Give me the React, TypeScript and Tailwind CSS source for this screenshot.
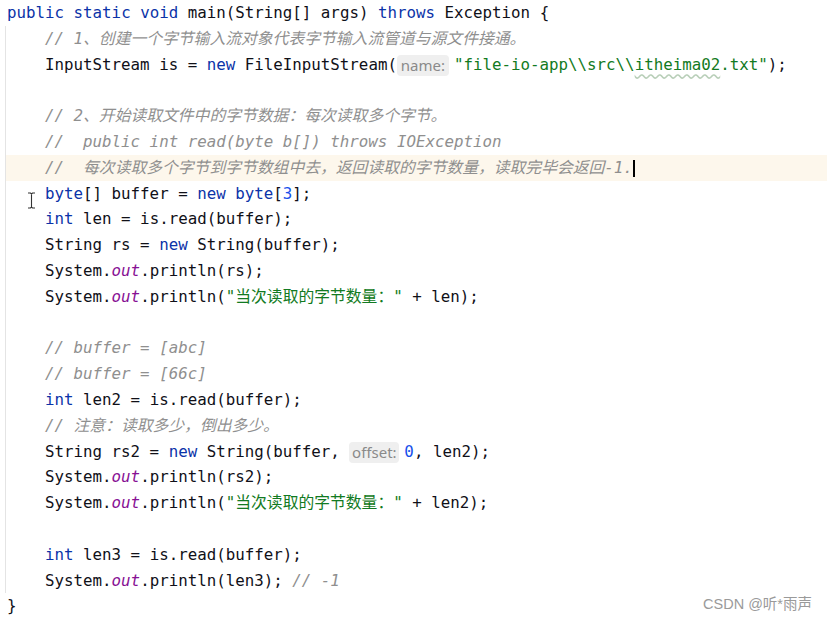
import type { ReactNode } from "react";

const mono = "font-['DejaVu_Sans_Mono','Noto_Sans_CJK_SC',monospace]";

function K({ children }: { children: ReactNode }) {
  return <span className="text-[#0b33a8]">{children}</span>;
}
function S({ children }: { children: ReactNode }) {
  return <span className="text-[#127a22]">{children}</span>;
}
function C({ children }: { children: ReactNode }) {
  return <span className="italic text-[#8f8f8f]">{children}</span>;
}
function F({ children }: { children: ReactNode }) {
  return <span className="italic text-[#871094]">{children}</span>;
}
function N({ children }: { children: ReactNode }) {
  return <span className="text-[#1750eb]">{children}</span>;
}
function Hint({ label, w }: { label: string; w: string }) {
  return (
    <span
      className={`inline-block ${w} h-[21px] mr-[5px] rounded-[4px] bg-[#efefef] text-center align-middle font-['Noto_Sans',sans-serif] not-italic text-[15px] leading-[21px] text-[#8a8a8a]`}
    >
      {label}
    </span>
  );
}

function Line({ children }: { children?: ReactNode }) {
  return <div className="h-[25.8px] leading-[25.8px] whitespace-pre">{children}</div>;
}

export default function App() {
  return (
    <div className={`relative w-[827px] h-[625px] overflow-hidden bg-white text-[15.8px] text-[#101018] ${mono}`}>
      <div className="pl-[7px]">
        <Line>
          <K>public static void</K> main(String[] args) <K>throws</K> Exception {"{"}
        </Line>
      </div>

      {/* method body with indent guide */}
      <div className="ml-[5px] border-l border-[#e4e4e4]">
        <div className="pl-[39px]">
          <Line>
            <C>// 1、创建一个字节输入流对象代表字节输入流管道与源文件接通。</C>
          </Line>
          <Line>
            InputStream is = <K>new</K> FileInputStream(<Hint label="name:" w="w-[52px]" />
            <S>
              "file-io-app\\src\\
              <span className="underline decoration-wavy decoration-[#b9cfb9] underline-offset-[4px]">itheima02</span>
              .txt"
            </S>
            );
          </Line>
          <Line />
          <Line>
            <C>// 2、开始读取文件中的字节数据：每次读取多个字节。</C>
          </Line>
          <Line>
            <C>//  public int read(byte b[]) throws IOException</C>
          </Line>
        </div>
        {/* current line */}
        <div className="pl-[39px] bg-[#fdf7ec]">
          <Line>
            <C>//  每次读取多个字节到字节数组中去，返回读取的字节数量，读取完毕会返回-1.</C>
            <span className="inline-block w-[2px] h-[17px] bg-black align-middle" />
          </Line>
        </div>
        <div className="pl-[39px]">
          <Line>
            <K>byte</K>[] buffer = <K>new byte</K>[<N>3</N>];
          </Line>
          <Line>
            <K>int</K> len = is.read(buffer);
          </Line>
          <Line>
            String rs = <K>new</K> String(buffer);
          </Line>
          <Line>
            System.<F>out</F>.println(rs);
          </Line>
          <Line>
            System.<F>out</F>.println(<S>"当次读取的字节数量："</S> + len);
          </Line>
          <Line />
          <Line>
            <C>// buffer = [abc]</C>
          </Line>
          <Line>
            <C>// buffer = [66c]</C>
          </Line>
          <Line>
            <K>int</K> len2 = is.read(buffer);
          </Line>
          <Line>
            <C>// 注意：读取多少，倒出多少。</C>
          </Line>
          <Line>
            String rs2 = <K>new</K> String(buffer, <Hint label="offset:" w="w-[50px]" />
            <N>0</N>, len2);
          </Line>
          <Line>
            System.<F>out</F>.println(rs2);
          </Line>
          <Line>
            System.<F>out</F>.println(<S>"当次读取的字节数量："</S> + len2);
          </Line>
          <Line />
          <Line>
            <K>int</K> len3 = is.read(buffer);
          </Line>
          <Line>
            System.<F>out</F>.println(len3); <C>// -1</C>
          </Line>
        </div>
      </div>

      <div className="pl-[7px]">
        <Line>{"}"}</Line>
      </div>

      {/* mouse I-beam */}
      <svg className="absolute left-[27px] top-[192px]" width="9" height="17" viewBox="0 0 9 17">
        <path d="M1 1h2.5L4.5 2 5.5 1H8M4.5 2v13M1 16h2.5l1-1 1 1H8" fill="none" stroke="#333" strokeWidth="1.1" />
      </svg>

      <div className="absolute right-[15px] bottom-[9px] font-['Liberation_Sans','Noto_Sans_CJK_SC',sans-serif] text-[14.5px] text-[#9a9a9a]">
        CSDN @听*雨声
      </div>
    </div>
  );
}
